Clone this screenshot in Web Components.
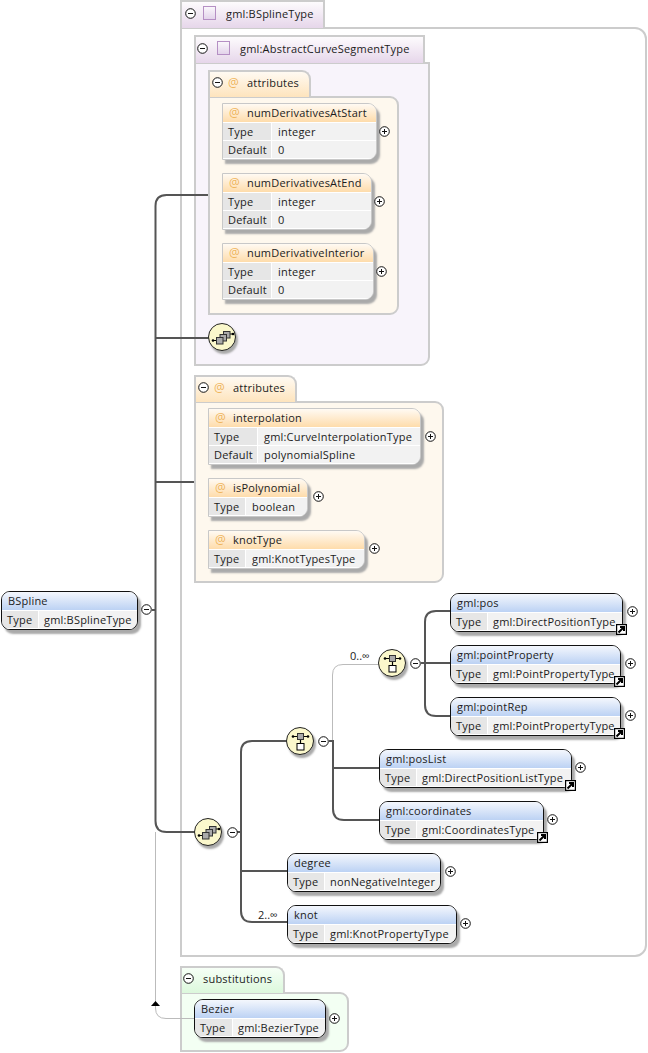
<!DOCTYPE html>
<html>
<head>
<meta charset="utf-8">
<style>
  html, body { margin: 0; background: #fff; }
  body { font: 11px "Open Sans", "Liberation Sans", sans-serif; color: #1c1c1c; }
</style>
</head>
<body>
<xsd-diagram>
  <xsd-panel kind="type" toggle="5" style="left:180px;top:0" tabw="145" w="467" h="930"><span>gml:BSplineType</span></xsd-panel>
  <xsd-panel kind="type" toggle="3" inner style="left:194px;top:35px" tabw="231" w="236" h="304"><span>gml:AbstractCurveSegmentType</span></xsd-panel>
  <xsd-panel kind="attrs" toggle="4" style="left:208px;top:70px" tabw="103" w="191" h="219"><span>attributes</span></xsd-panel>
  <xsd-panel kind="attrs" toggle="4" style="left:194px;top:375px" tabw="103" w="250" h="182"><span>attributes</span></xsd-panel>
  <xsd-panel kind="subst" toggle="3" style="left:180px;top:966px" tabw="105" w="169" h="60"><span>substitutions</span></xsd-panel>

  <xsd-wires></xsd-wires>

  <xsd-node attr style="left:222px;top:103px;width:155px" key="49" name="numDerivativesAtStart">
    <xsd-row key="Type">integer</xsd-row><xsd-row key="Default">0</xsd-row></xsd-node>
  <xsd-node attr style="left:222px;top:173px;width:150px" key="49" name="numDerivativesAtEnd">
    <xsd-row key="Type">integer</xsd-row><xsd-row key="Default">0</xsd-row></xsd-node>
  <xsd-node attr style="left:222px;top:243px;width:152px" key="49" name="numDerivativeInterior">
    <xsd-row key="Type">integer</xsd-row><xsd-row key="Default">0</xsd-row></xsd-node>

  <xsd-node attr style="left:208px;top:408px;width:213px" key="49" name="interpolation">
    <xsd-row key="Type">gml:CurveInterpolationType</xsd-row><xsd-row key="Default">polynomialSpline</xsd-row></xsd-node>
  <xsd-node attr style="left:208px;top:478px;width:100px" key="37" name="isPolynomial">
    <xsd-row key="Type">boolean</xsd-row></xsd-node>
  <xsd-node attr style="left:208px;top:530px;width:157px" key="37" name="knotType">
    <xsd-row key="Type">gml:KnotTypesType</xsd-row></xsd-node>

  <xsd-node style="left:1px;top:591px;width:137px" key="37" name="BSpline">
    <xsd-row key="Type">gml:BSplineType</xsd-row></xsd-node>

  <xsd-node ref style="left:450px;top:593px;width:173px" key="37" name="gml:pos">
    <xsd-row key="Type">gml:DirectPositionType</xsd-row></xsd-node>
  <xsd-node ref style="left:450px;top:645px;width:171px" key="37" name="gml:pointProperty">
    <xsd-row key="Type">gml:PointPropertyType</xsd-row></xsd-node>
  <xsd-node ref style="left:450px;top:697px;width:171px" key="37" name="gml:pointRep">
    <xsd-row key="Type">gml:PointPropertyType</xsd-row></xsd-node>
  <xsd-node ref style="left:379px;top:749px;width:193px" key="37" name="gml:posList">
    <xsd-row key="Type">gml:DirectPositionListType</xsd-row></xsd-node>
  <xsd-node ref style="left:379px;top:801px;width:165px" key="37" name="gml:coordinates">
    <xsd-row key="Type">gml:CoordinatesType</xsd-row></xsd-node>
  <xsd-node style="left:287px;top:853px;width:154px" key="37" name="degree">
    <xsd-row key="Type">nonNegativeInteger</xsd-row></xsd-node>
  <xsd-node style="left:287px;top:905px;width:170px" key="37" name="knot">
    <xsd-row key="Type">gml:KnotPropertyType</xsd-row></xsd-node>
  <xsd-node style="left:194px;top:999px;width:132px" key="38" name="Bezier">
    <xsd-row key="Type">gml:BezierType</xsd-row></xsd-node>

  <xsd-compositor kind="seq" style="left:208px;top:323px"></xsd-compositor>
  <xsd-compositor kind="seq" style="left:194px;top:818px"></xsd-compositor>
  <xsd-compositor kind="choice" style="left:286px;top:727px"></xsd-compositor>
  <xsd-compositor kind="choice" style="left:378px;top:649px"></xsd-compositor>

  <xsd-toggle style="left:379px;top:126px">+</xsd-toggle>
  <xsd-toggle style="left:374px;top:196px">+</xsd-toggle>
  <xsd-toggle style="left:376px;top:266px">+</xsd-toggle>
  <xsd-toggle style="left:425px;top:431px">+</xsd-toggle>
  <xsd-toggle style="left:313px;top:491px">+</xsd-toggle>
  <xsd-toggle style="left:369px;top:543px">+</xsd-toggle>
  <xsd-toggle style="left:141px;top:604px">-</xsd-toggle>
  <xsd-toggle style="left:227px;top:827px">-</xsd-toggle>
  <xsd-toggle style="left:318px;top:736px">-</xsd-toggle>
  <xsd-toggle style="left:410px;top:658px">-</xsd-toggle>
  <xsd-toggle style="left:627px;top:606px">+</xsd-toggle>
  <xsd-toggle style="left:625px;top:658px">+</xsd-toggle>
  <xsd-toggle style="left:625px;top:710px">+</xsd-toggle>
  <xsd-toggle style="left:575px;top:762px">+</xsd-toggle>
  <xsd-toggle style="left:547px;top:814px">+</xsd-toggle>
  <xsd-toggle style="left:445px;top:866px">+</xsd-toggle>
  <xsd-toggle style="left:460px;top:918px">+</xsd-toggle>
  <xsd-toggle style="left:329px;top:1013px">+</xsd-toggle>

  <xsd-occurs style="left:350px;top:649px">0..∞</xsd-occurs>
  <xsd-occurs style="left:258px;top:908px">2..∞</xsd-occurs>
</xsd-diagram>

<script>
const FONT = '"Open Sans", "Liberation Sans", sans-serif';

class XsdDiagram extends HTMLElement {
  constructor() {
    super();
    this.attachShadow({ mode: 'open' }).innerHTML = `
      <style>:host { display: block; position: relative; width: 648px; height: 1053px; overflow: hidden; }</style>
      <slot></slot>`;
  }
}

// connector lines, the thin grey ones are the optional / substitution links
class XsdWires extends HTMLElement {
  constructor() {
    super();
    this.attachShadow({ mode: 'open' }).innerHTML = `
      <style>
        :host { position: absolute; left: 0; top: 0; display: block; }
        svg { display: block; }
        path { fill: none; stroke: #555; stroke-width: 2; }
        .thin { stroke: #bbb; stroke-width: 1; }
        .tip { fill: #000; stroke: none; }
      </style>
      <svg width="648" height="1053">
        <path class="thin" d="M155.500 832V1008Q155.500 1018.500 166 1018.500H194"/>
        <path class="tip" d="M155.500 1001l-4.500 5h9z"/>
        <path class="thin" d="M332.500 741V675Q332.500 664.500 343 664.500H379"/>
        <path d="M152 610H155.500"/>
        <path d="M208 195H166.500Q155.500 195 155.500 206V821Q155.500 832 166.500 832H195"/>
        <path d="M155.500 338H209"/>
        <path d="M155.500 482H194"/>
        <path d="M237 832H241"/>
        <path d="M288 741H252Q241 741 241 752V911Q241 922 252 922H287"/>
        <path d="M241 871H287"/>
        <path d="M329 741H333V809Q333 820 344 820H379"/>
        <path d="M333 768H379"/>
        <path d="M421 663H425"/>
        <path d="M450 611H436Q425 611 425 622V705Q425 716 436 716H450"/>
        <path d="M425 663H450"/>
      </svg>`;
  }
}

const panelKinds = {
  type: { top: '#fdfbfd', bot: '#e6d6ea', box: '#fff', tabh: 28, textAt: 46, glyphAt: 23 },
  attrs: { top: '#fffaf2', bot: '#fee4bd', box: '#fef8ee', tabh: 27, textAt: 39, glyphAt: 20 },
  subst: { top: '#f6fff6', bot: '#dcf8dc', box: '#f3fff3', tabh: 27, textAt: 23, glyphAt: 23 },
};

class XsdPanel extends HTMLElement {
  constructor() {
    super();
    const kind = this.getAttribute('kind');
    const c = panelKinds[kind];
    const inner = this.hasAttribute('inner');
    const toggleAt = +this.getAttribute('toggle');
    const toggleEnd = toggleAt + 11;
    const glyph = kind === 'type'
      ? `<svg width="13" height="14"><defs><linearGradient id="g" x2="0" y2="1"><stop offset="0" stop-color="#fbf8fc"/><stop offset="1" stop-color="#e2d2ea"/></linearGradient></defs><rect x=".5" y=".5" width="12" height="13" fill="url(#g)" stroke="#b58fc4"/></svg>`
      : kind === 'attrs' ? `<span class="at">@</span>` : '';
    const rounded = kind !== 'type';
    const boxRadius = kind === 'type' && !inner ? '0 12px 12px 0' : inner ? '0 0 9px 0' : '0 9px 9px 0';
    this.attachShadow({ mode: 'open' }).innerHTML = `
      <style>
        :host { position: absolute; display: block; font: 11px ${FONT}; letter-spacing: .2px; }
        .tab {
          box-sizing: border-box; width: ${this.getAttribute('tabw')}px; height: ${c.tabh}px;
          display: flex; align-items: center; padding: 0 0 4px ${toggleAt - 2}px;
          border: 2px solid #ccc; border-bottom: 0;
          border-radius: 0 ${rounded ? 9 : 0}px 0 0;
          background: linear-gradient(${c.top}, ${c.bot});
          margin-bottom: -1px; position: relative;
        }
        .tab xsd-toggle { position: static; }
        .g { display: flex; align-items: center; width: ${c.textAt - toggleEnd}px; padding-left: ${c.glyphAt - toggleEnd}px; box-sizing: border-box; }
        .at { color: #efb55c; font-size: 12px; }
        .box {
          box-sizing: border-box; width: ${this.getAttribute('w')}px; height: ${this.getAttribute('h')}px;
          border: 2px solid #ccc; border-radius: ${boxRadius};
          background: ${inner ? '#f8f4fb' : c.box};
        }
      </style>
      <div class="tab"><xsd-toggle>-</xsd-toggle><div class="g">${glyph}</div><slot></slot></div>
      <div class="box"></div>`;
  }
}

class XsdNode extends HTMLElement {
  constructor() {
    super();
    const attr = this.hasAttribute('attr');
    const ref = this.hasAttribute('ref');
    this.attachShadow({ mode: 'open' }).innerHTML = `
      <style>
        :host {
          position: absolute; display: block; box-sizing: border-box;
          font: 11px ${FONT}; letter-spacing: .2px;
          --key: ${this.getAttribute('key')}px;
          --pad: ${attr ? 6 : 5}px;
        }
        .card {
          border: 1px solid ${attr ? '#c8c8c8' : '#111'};
          border-radius: ${attr ? '0 9px 9px 0' : '9px'};
          box-shadow: 3px 4px 2px #aaa;
          background: #f2f2f2; overflow: hidden;
        }
        .head {
          box-sizing: border-box; height: 19px; padding: 0 0 2px 6px;
          display: flex; align-items: center; gap: 7px;
          background: ${attr ? 'linear-gradient(#fffaf3, #fedcab)' : 'linear-gradient(#f4f7fd, #bcd2f4)'};
          border-bottom: 1px solid #fff;
        }
        .at { color: #efb55c; font-size: 12px; }
        .ref {
          position: absolute; right: -4px; bottom: -3px; width: 11px; height: 11px; display: block;
        }
      </style>
      <div class="card">
        <div class="head">${attr ? '<span class="at">@</span>' : ''}<span>${this.getAttribute('name')}</span></div>
        <slot></slot>
      </div>
      ${ref ? `<svg class="ref" viewBox="0 0 11 11"><rect x=".6" y=".6" width="9.800" height="9.800" fill="#fff" stroke="#000" stroke-width="1.200"/><path d="M2.500 8.500L7 4M4 3H8V7" fill="none" stroke="#000" stroke-width="2"/></svg>` : ''}`;
  }
}

class XsdRow extends HTMLElement {
  constructor() {
    super();
    this.attachShadow({ mode: 'open' }).innerHTML = `
      <style>
        :host { display: grid; grid-template-columns: var(--key) 1fr; height: 18px; line-height: 17px; }
        .k { background: #e6e6e6; padding-left: 5px; border-right: 1px solid #fff; border-bottom: 1px solid #fff; }
        .v { background: #f2f2f2; padding-left: var(--pad); white-space: nowrap; border-bottom: 1px solid #fff; }
      </style>
      <div class="k">${this.getAttribute('key')}</div>
      <div class="v"><slot></slot></div>`;
  }
}

class XsdCompositor extends HTMLElement {
  constructor() {
    super();
    const seq = this.getAttribute('kind') === 'seq';
    const glyph = seq ? `
      <path d="M5 17.500H9M21 11H25" stroke="#000" stroke-width="1.200"/>
      <circle cx="5" cy="17.500" r="1.300"/><circle cx="25" cy="11" r="1.300"/>
      <rect x="15.500" y="8.500" width="6.500" height="6.500" fill="#aaa" stroke="#333"/>
      <rect x="12" y="11.500" width="6.500" height="6.500" fill="#aaa" stroke="#333"/>
      <rect x="8.500" y="14.500" width="6.500" height="6.500" fill="#aaa" stroke="#333"/>` : `
      <path d="M7 9.500H22M14.500 12V16" stroke="#000" stroke-width="1.200"/>
      <circle cx="7" cy="9.500" r="1.300"/><circle cx="22" cy="9.500" r="1.300"/>
      <rect x="11.500" y="6.500" width="6" height="6" fill="#aaa" stroke="#333"/>
      <rect x="11" y="16.500" width="7" height="6.500" fill="#fff" stroke="#000"/>`;
    this.attachShadow({ mode: 'open' }).innerHTML = `
      <style>
        :host { position: absolute; display: block; width: 28px; height: 28px; }
        .disc {
          width: 28px; height: 28px; box-sizing: border-box; border-radius: 50%;
          border: 1px solid #222; background: #fbf8cc; box-shadow: 2px 3px 2px #aaa;
          position: relative;
        }
        svg { position: absolute; left: -1px; top: -1px; }
      </style>
      <div class="disc"><svg width="28" height="28">${glyph}</svg></div>`;
  }
}

class XsdToggle extends HTMLElement {
  constructor() {
    super();
    this.attachShadow({ mode: 'open' }).innerHTML = `
      <style>
        :host { position: absolute; display: block; width: 11px; height: 11px; flex: none; }
        svg { display: block; }
      </style>
      <svg width="11" height="11" viewBox="0 0 11 11">
        <circle cx="5.500" cy="5.500" r="4.800" fill="#fff" stroke="#111" stroke-width="1"/>
        <path d="${this.textContent.trim() === '+' ? 'M3 5.500H8M5.500 3V8' : 'M3 5.500H8'}" stroke="#111" stroke-width="1"/>
      </svg>`;
  }
}

class XsdOccurs extends HTMLElement {
  constructor() {
    super();
    this.attachShadow({ mode: 'open' }).innerHTML = `
      <style>:host { position: absolute; display: block; font: 11px ${FONT}; color: #222; line-height: 14px; }</style>
      <slot></slot>`;
  }
}

customElements.define('xsd-toggle', XsdToggle);
customElements.define('xsd-diagram', XsdDiagram);
customElements.define('xsd-wires', XsdWires);
customElements.define('xsd-panel', XsdPanel);
customElements.define('xsd-node', XsdNode);
customElements.define('xsd-row', XsdRow);
customElements.define('xsd-compositor', XsdCompositor);
customElements.define('xsd-occurs', XsdOccurs);
</script>
</body>
</html>
